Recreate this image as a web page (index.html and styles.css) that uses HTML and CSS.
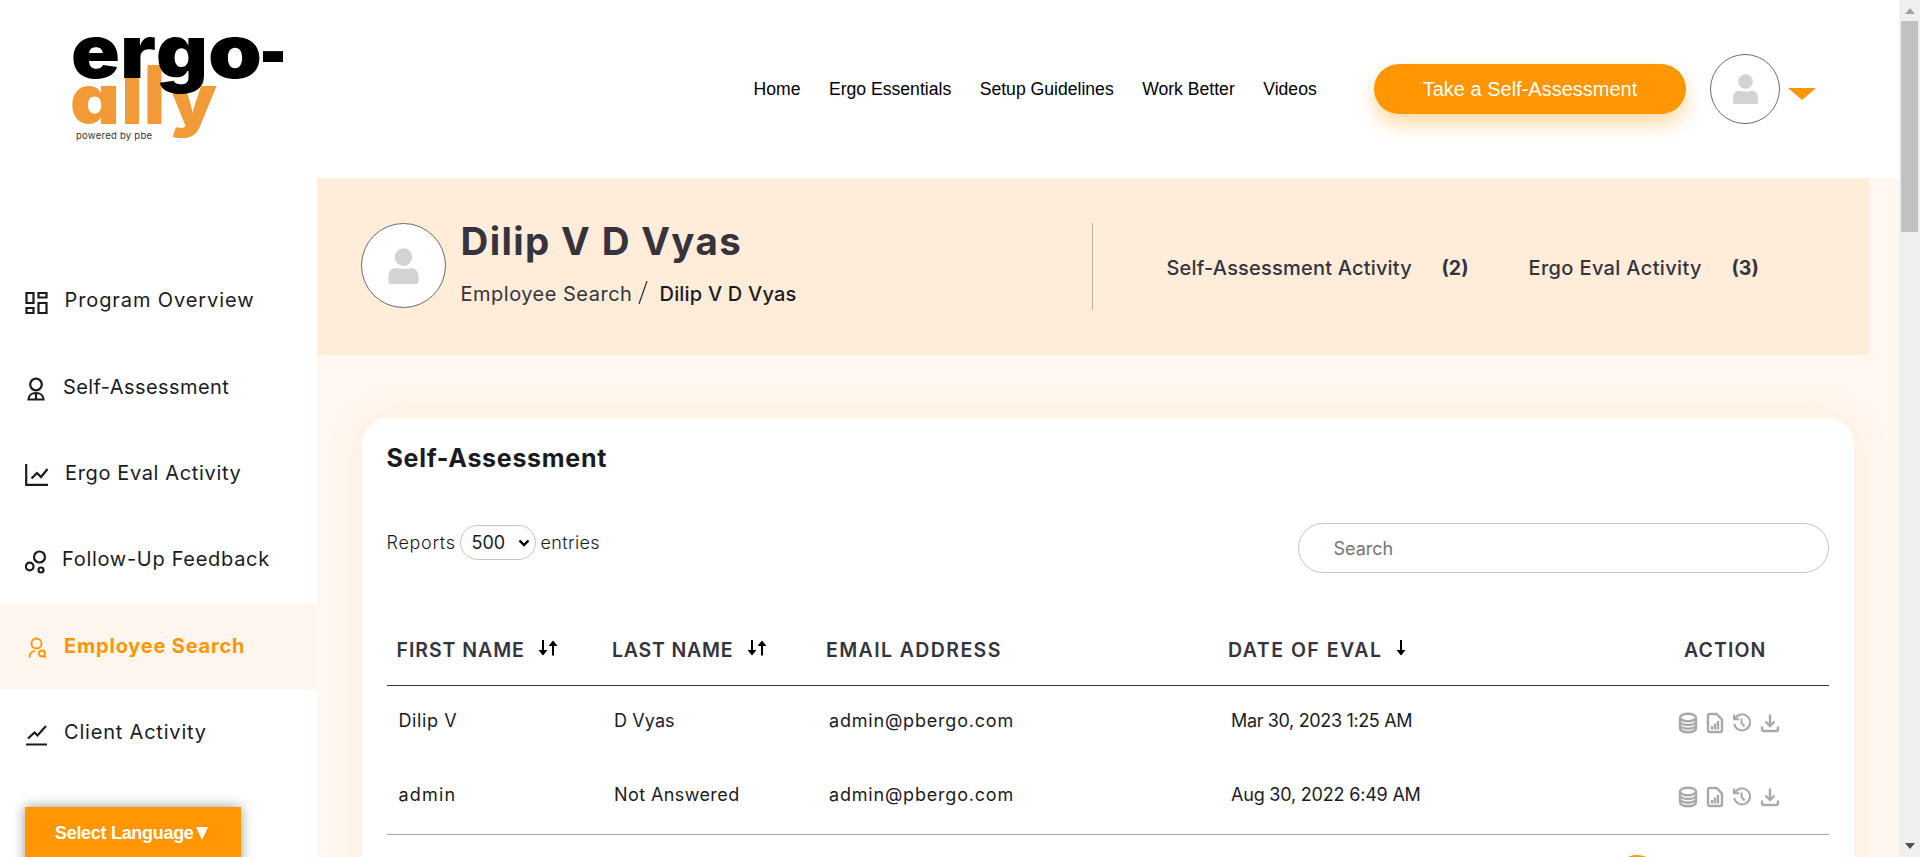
FILE: index.html
```html
<!DOCTYPE html>
<html lang="en">
<head>
<meta charset="utf-8">
<title>Ergo-Ally</title>
<link rel="stylesheet" href="styles.css">
</head>
<body>
<svg class="defs" width="0" height="0" aria-hidden="true">
  <symbol id="person" viewBox="0 0 26 31"><circle cx="13" cy="7.800" r="7.600"/><path d="M6.500 17.200c4.300 1.300 8.700 1.300 13 0 4 0 6.500 3.300 6.500 7.300v4c0 1.700-.8 2.500-2.300 2.500H2.300C.8 31 0 30.200 0 28.500v-4c0-4 2.500-7.300 6.500-7.300z"/></symbol>
  <symbol id="sort" viewBox="0 0 20 16"><path d="M4 0h2v10h3.500L5 15.500.5 10H4zM14 15.500h2V6h3.500L15 .5 10.500 6H14z"/></symbol>
  <symbol id="down" viewBox="0 0 10 16"><path d="M4 0h2v10h3.500L5 15.500.5 10H4z"/></symbol>
  <symbol id="db" viewBox="0 0 20 22"><ellipse cx="10" cy="5.500" rx="8" ry="3.700"/><path d="M2 5.500v11c0 2 3.500 3.800 8 3.800s8-1.800 8-3.800v-11M2 9.500c0 2 3.500 3.500 8 3.500s8-1.500 8-3.500M2 13.200c0 2 3.500 3.500 8 3.500s8-1.500 8-3.500"/></symbol>
  <symbol id="doc" viewBox="0 0 18 22"><path d="M3.500 2h7L16 7.500V18c0 1.300-.7 2-2 2H4c-1.300 0-2-.7-2-2V3.500C2 2.500 2.500 2 3.500 2z"/><path d="M6 14v3.500M9 11.500v6M12 9v8.500"/></symbol>
  <symbol id="history" viewBox="0 0 20 20"><path d="M3 5.500A8 8 0 1 1 2.200 11M2 1.500v4.800h5M9.500 5.500V10l3 3.500"/></symbol>
  <symbol id="download" viewBox="0 0 20 20"><path d="M10 1.500v11M5.500 8.500l4.500 4.500 4.500-4.500M2 13.500V16c0 1.300.7 2 2 2h12c1.300 0 2-.7 2-2v-2.500"/></symbol>
</svg>
<div class="window">
  <div class="page">
    <header class="header">
      <svg class="logo" width="220" height="120" viewBox="0 0 220 120">
        <g class="logo-ally">
          <text x="-3" y="96" textLength="50" lengthAdjust="spacingAndGlyphs">a</text>
          <text class="tall" x="48.500" y="96" textLength="21" lengthAdjust="spacingAndGlyphs">l</text>
          <text class="tall" x="71" y="96" textLength="21" lengthAdjust="spacingAndGlyphs">l</text>
          <text x="96" y="96" textLength="48" lengthAdjust="spacingAndGlyphs">y</text>
        </g>
        <g class="logo-ergo">
          <text x="-2" y="50" textLength="49" lengthAdjust="spacingAndGlyphs">e</text>
          <text x="47" y="50" textLength="36" lengthAdjust="spacingAndGlyphs">r</text>
          <text x="83" y="50" textLength="52" lengthAdjust="spacingAndGlyphs">g</text>
          <text x="135" y="50" textLength="54" lengthAdjust="spacingAndGlyphs">o</text>
          <text x="186" y="50" textLength="28" lengthAdjust="spacingAndGlyphs">-</text>
        </g>
        <text class="logo-by" x="3" y="111" textLength="76">powered by pbe</text>
      </svg>
      <nav class="nav"><a>Home</a><a>Ergo Essentials</a><a>Setup Guidelines</a><a>Work Better</a><a>Videos</a></nav>
      <button class="cta">Take a Self-Assessment</button>
      <div class="avatar avatar-small"><svg width="25" height="30"><use href="#person"/></svg></div>
      <svg class="caret" width="28" height="12" viewBox="0 0 28 12"><path d="M0 0h28L14 12z"/></svg>
    </header>
    <div class="body">
      <aside class="sidebar">
        <a class="item"><svg width="24" height="24" viewBox="0 0 24 24"><path d="M1.500 2h7v10h-7zM13.500 2h8v4.500h-8zM1.500 17h7v5h-7zM13.500 12h8v10h-8z"/></svg><span class="t1">Program Overview</span></a>
        <a class="item"><svg width="24" height="24" viewBox="0 0 24 24"><circle cx="11" cy="7.500" r="5.800"/><path d="M3.500 22.500c0-4 3.200-6.500 7.500-6.500s7.500 2.500 7.500 6.500zM11 16v6"/></svg><span class="t2">Self-Assessment</span></a>
        <a class="item"><svg width="24" height="24" viewBox="0 0 24 24"><path d="M1.200 1v20.800H23M6.500 15.500L12 10l4 4L22.500 6"/></svg><span class="t3">Ergo Eval Activity</span></a>
        <a class="item"><svg width="24" height="24" viewBox="0 0 24 24"><circle cx="14.500" cy="7" r="5.500"/><circle cx="4.700" cy="16.500" r="3.800"/><circle cx="16" cy="20" r="2.500"/></svg><span class="t4">Follow-Up Feedback</span></a>
        <a class="item active"><svg width="24" height="24" viewBox="0 0 24 24"><circle cx="11.500" cy="7.500" r="5"/><path d="M4.500 21.500c0-4.500 2-6 5.500-7M20.800 21.500l-2-2"/><circle cx="17" cy="17.500" r="3"/></svg><span class="t5">Employee Search</span></a>
        <a class="item"><svg width="24" height="24" viewBox="0 0 24 24"><path d="M3 15.500l6.500-6 3 3L21 3M1 21.500h21"/></svg><span class="t6">Client Activity</span></a>
        <button class="language">Select Language<span class="tri"></span></button>
      </aside>
      <main class="main">
        <section class="banner">
          <div class="avatar avatar-large"><svg width="31" height="36"><use href="#person"/></svg></div>
          <div class="who">
            <h1>Dilip V D Vyas</h1>
            <div class="crumbs"><span class="crumb">Employee Search</span><svg width="10" height="23" viewBox="0 0 10 23"><path d="M9 0L1 23"/></svg><span class="current">Dilip V D Vyas</span></div>
          </div>
          <div class="stats">
            <span class="stat-a">Self-Assessment Activity</span><b class="num-a">(2)</b>
            <span class="stat-b">Ergo Eval Activity</span><b>(3)</b>
          </div>
        </section>
        <section class="card">
          <h2>Self-Assessment</h2>
          <div class="tools">
            <div class="entries"><span class="reports">Reports</span><span class="select">500<svg width="12" height="8" viewBox="0 0 12 8"><path d="M1.500 1.500L6 6l4.500-4.500"/></svg></span><span class="ent">entries</span></div>
            <div class="search">Search</div>
          </div>
          <div class="row head">
            <div><span class="h-first">FIRST NAME</span><svg class="sort" width="20" height="16"><use href="#sort"/></svg></div>
            <div><span class="h-last">LAST NAME</span><svg class="sort" width="20" height="16"><use href="#sort"/></svg></div>
            <div><span class="h-email">EMAIL ADDRESS</span></div>
            <div><span class="h-date">DATE OF EVAL</span><svg class="sort" width="10" height="16"><use href="#down"/></svg></div>
            <div class="action"><span>ACTION</span></div>
          </div>
          <div class="row">
            <div class="first">Dilip V</div><div class="short">D Vyas</div><div class="mail">admin@pbergo.com</div><div class="date">Mar 30, 2023 1:25 AM</div>
            <div class="icons"><svg width="20" height="22"><use href="#db"/></svg><svg width="18" height="22"><use href="#doc"/></svg><svg class="thin" width="20" height="20"><use href="#history"/></svg><svg width="20" height="20"><use href="#download"/></svg></div>
          </div>
          <div class="row last">
            <div class="lower">admin</div><div class="long">Not Answered</div><div class="mail">admin@pbergo.com</div><div class="date date-2">Aug 30, 2022 6:49 AM</div>
            <div class="icons"><svg width="20" height="22"><use href="#db"/></svg><svg width="18" height="22"><use href="#doc"/></svg><svg class="thin" width="20" height="20"><use href="#history"/></svg><svg width="20" height="20"><use href="#download"/></svg></div>
          </div>
          <div class="pager"><span class="dot"></span></div>
        </section>
      </main>
    </div>
  </div>
  <div class="scrollbar"><i class="up"></i><div class="thumb"></div><i class="dn"></i></div>
</div>
</body>
</html>
```
FILE: styles.css
```css
* { box-sizing: border-box; }
body { margin: 0; font-family: Inter, "Open Sans", sans-serif; color: #1b1b1f; background: #fff; overflow: hidden; }
.defs { position: absolute; }
.window { display: flex; width: 1920px; height: 857px; overflow: hidden; }
.page { flex: 1; height: 857px; overflow: hidden; }
h1, h2 { margin: 0; }
button { border: 0; font: inherit; }

.header { display: flex; height: 178px; align-items: flex-start; }
.logo { margin: 28px 0 0 73px; flex: none; overflow: visible; }
.logo text { font-weight: 900; font-feature-settings: "cv11"; }
.logo-ergo text { font-size: 74px; fill: #000; }
.logo-ally text { font-size: 69px; fill: #f29a38; }
.logo-ally text.tall { font-size: 81px; }
.logo text.logo-by { font-size: 9.500px; font-weight: 400; fill: #333; }
.nav { display: flex; gap: 28.500px; margin: 78px 0 0 460.500px; font: 17.600px/22px "Liberation Sans", Arial, sans-serif; color: #000; white-space: nowrap; width: 620.500px; }
.cta { width: 312px; height: 50px; margin-top: 64px; flex: none; border-radius: 25px; background: #ff9602; color: #fff; font: 20px/50px "Liberation Sans", Arial, sans-serif; padding: 0; box-shadow: 0 10px 20px rgba(255,150,2,.36); }
.avatar { display: flex; align-items: center; justify-content: center; border: 1px solid #6b6b6b; border-radius: 50%; background: #fff; fill: #d3d3d3; flex: none; }
.avatar-small { width: 70px; height: 70px; margin: 54px 0 0 24px; }
.caret { margin: 88px 0 0 8px; fill: #ff9602; }

.body { display: flex; height: 679px; }
.sidebar { width: 316.500px; padding-top: 80px; flex: none; background: #fff; }
.item { display: flex; align-items: center; height: 86.400px; padding-left: 25px; gap: 15px; font-size: 20px; white-space: nowrap; }
.item svg { fill: none; stroke: #1b1b1f; stroke-width: 2.200; margin-top: 3px; flex: none; }
.item span { margin-top: -2px; }
.item .t1 { letter-spacing: .9px; margin-left: .5px; }
.item .t2 { letter-spacing: .42px; margin-left: -1px; }
.item .t3 { letter-spacing: .64px; margin-left: 1px; }
.item .t4 { letter-spacing: .7px; margin-left: -2px; }
.item .t5 { letter-spacing: .8px; }
.item .t6 { letter-spacing: .8px; }
.active { background: #fff6f0; color: #ff9602; font-weight: 700; }
.active svg { stroke: #ff9602; stroke-width: 1.800; }
.language { display: flex; align-items: center; width: 216px; height: 70px; margin: 31px 0 0 25px; padding: 0 0 18px 30px; background: #ff9602; color: #fff; font: bold 18px "Liberation Sans", Arial, sans-serif; letter-spacing: -.3px; box-shadow: 0 0 12px rgba(0,0,0,.4); }
.tri { border: solid transparent; border-width: 13px 6.500px 0; border-top-color: #fff; margin-left: 2px; }

.main { flex: 1; background: #fff7f0; }
.banner { display: flex; width: 1552px; height: 177px; background: #ffecd9; color: #37333d; }
.avatar-large { width: 85px; height: 85px; margin: 45px 0 0 44px; }
.who { margin: 39px 0 0 15px; width: 631px; white-space: nowrap; }
h1 { font-size: 38.500px; line-height: 48px; font-weight: 700; letter-spacing: 1.350px; }
.crumbs { display: flex; align-items: center; height: 30px; margin-top: 14px; font-size: 20px; }
.crumbs svg { fill: none; stroke: #37333d; stroke-width: 1.300; margin: -4px 12px 0 4px; }
.crumb { width: 173px; letter-spacing: .5px; }
.current { color: #1b1b1f; font-weight: 500; letter-spacing: .2px; }
.stats { display: flex; align-items: center; height: 87px; margin-top: 45px; padding: 2px 0 0 74px; border-left: 1px solid #b9b2b0; font-size: 20px; font-weight: 500; white-space: nowrap; }
.stat-a { width: 275px; letter-spacing: .2px; }
.num-a { width: 87px; }
.stat-b { width: 203px; letter-spacing: .35px; }
.stats b { font-size: 19.500px; }

.card { margin: 63px 0 0 45px; width: 1492px; height: 500px; padding: 23px 25px 0; background: #fff; border-radius: 26px; box-shadow: 0 0 40px rgba(255,150,2,.1); }
h2 { font-size: 25px; line-height: 34px; font-weight: 700; letter-spacing: .7px; }
.tools { display: flex; justify-content: space-between; margin-top: 48px; font-size: 18px; font-weight: 300; }
.entries { display: flex; align-items: center; height: 35px; margin-top: 2px; }
.select { display: flex; align-items: center; justify-content: space-between; width: 76px; height: 35px; margin: 0 5px 0 4px; padding: 0 5px 0 11px; border: 1px solid #c4c4c4; border-radius: 17.500px; font-weight: 400; }
.select svg { fill: none; stroke: #000; stroke-width: 2.400; }
.reports { width: 69px; letter-spacing: .7px; }
.ent { letter-spacing: .35px; }
.search { width: 531px; height: 50px; border: 1px solid #c4c4c4; border-radius: 25px; padding-left: 35px; line-height: 50px; color: #757575; font-weight: 400; }
.row { display: grid; grid-template-columns: 215.500px 214px 402px 449px 1fr; height: 74px; align-items: center; padding-left: 12px; font-size: 18px; white-space: nowrap; }
.row > div { padding-bottom: 5px; }
.row .first { letter-spacing: .6px; }
.row .short { letter-spacing: .1px; }
.row .lower { letter-spacing: 1.200px; }
.row .long { letter-spacing: .4px; }
.row .mail { letter-spacing: .8px; padding-left: 1px; }
.row .date { letter-spacing: -.350px; padding-left: 1px; }
.row .date-2 { letter-spacing: -.2px; }
.row.head { height: 113px; padding: 42px 0 0 10px; font-size: 19.500px; font-weight: 600; color: #37333d; border-bottom: 1px solid #37333d; }
.head > div { display: flex; align-items: center; }
.row.head > div { padding-bottom: 0; }
.h-first { letter-spacing: .95px; }
.h-last { letter-spacing: .8px; }
.h-email { letter-spacing: 1.400px; }
.h-date { letter-spacing: 1.500px; }
.sort { margin-left: 13.500px; margin-top: -4px; fill: #000; }
.head .action { padding-left: 7px; letter-spacing: 1.100px; }
.row.last { height: 75px; border-bottom: 1px solid #aaa; }
.row > .icons { display: flex; gap: 8px; align-items: center; fill: none; stroke: #a9a9a9; stroke-width: 2.400; margin-left: -1px; padding-bottom: 1px; }
.thin { stroke-width: 2; }
.pager { display: flex; padding: 20px 0 0 1225px; }
.dot { width: 50px; height: 50px; border-radius: 50%; background: #ff9602; }

.scrollbar { width: 21px; height: 857px; background: #f0f0f0; display: flex; flex-direction: column; align-items: center; }
.thumb { width: 17px; height: 211px; background: #c1c1c1; margin-top: 7px; }
.up, .dn { border: solid transparent; }
.up { margin-top: 8px; border-width: 0 5px 6px; border-bottom-color: #a3a3a3; }
.dn { margin: auto 0 8px; border-width: 6px 5px 0; border-top-color: #505050; }
```
